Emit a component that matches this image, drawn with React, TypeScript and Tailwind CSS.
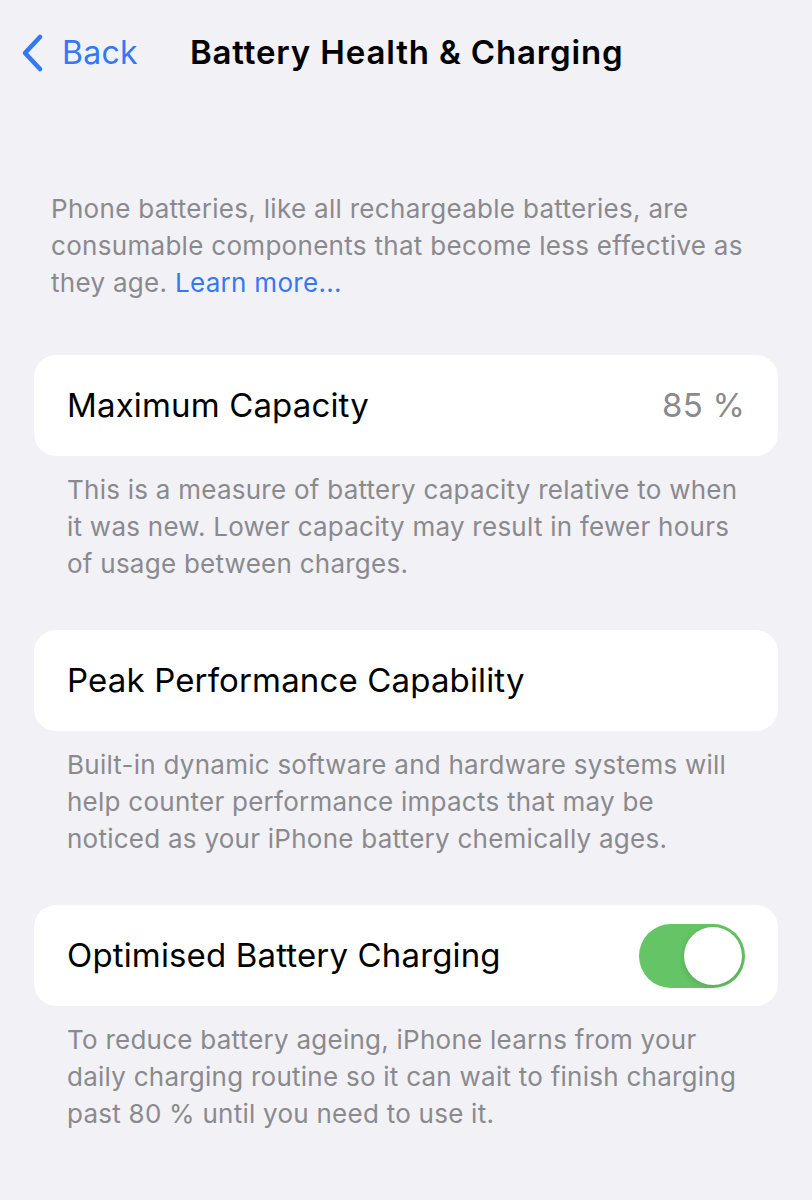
import React from 'react';

const font = { fontFamily: 'Inter, "Noto Sans", sans-serif' };

function Toggle({ on }: { on: boolean }) {
  return (
    <div
      className={`flex h-[64px] w-[106px] items-center rounded-full p-[3px] ${
        on ? 'justify-end bg-[#65c466]' : 'justify-start bg-[#e9e9eb]'
      }`}
    >
      <div className="h-[58px] w-[58px] rounded-full bg-white shadow-[0_2px_6px_rgba(0,0,0,0.15)]" />
    </div>
  );
}

function Section({
  label,
  value,
  toggle,
  footer,
}: {
  label: string;
  value?: string;
  toggle?: boolean;
  footer: string;
}) {
  return (
    <div>
      <div className="mx-[34px] flex h-[101px] items-center justify-between rounded-[22px] bg-white pl-[33px] pr-[33px]">
        <span className="text-[33px] tracking-[0.15px] text-black">{label}</span>
        {value && <span className="text-[33px] tracking-[0.2px] text-[#8a8a8e]">{value}</span>}
        {toggle !== undefined && <Toggle on={toggle} />}
      </div>
      <p className="mt-[15px] pl-[67px] pr-[62px] text-[26px] leading-[37px] tracking-[0.25px] text-[#8a8a8e]">
        {footer}
      </p>
    </div>
  );
}

export default function App() {
  return (
    <div className="min-h-[1200px] w-[812px] bg-[#f1f1f6]" style={font}>
      {/* navigation bar */}
      <div className="flex h-[106px] items-center">
        <div className="flex items-center pl-[19px] text-[#3478f6]">
          <svg width="26" height="40" viewBox="0 0 26 40" fill="none">
            <path
              d="M21 4 L6 20 L21 36"
              stroke="currentColor"
              strokeWidth="4.6"
              strokeLinecap="round"
              strokeLinejoin="round"
            />
          </svg>
          <span className="ml-[17px] text-[32px] tracking-[0.3px]">Back</span>
        </div>
        <h1 className="ml-[52px] text-[33px] font-semibold tracking-[0.85px] text-black">
          Battery Health &amp; Charging
        </h1>
      </div>

      <p className="mt-[84px] pl-[51px] pr-[50px] text-[26px] leading-[37px] tracking-[0.3px] text-[#8a8a8e]">
        Phone batteries, like all rechargeable batteries, are consumable components that become
        less effective as they age. <span className="text-[#3478f6]">Learn more...</span>
      </p>

      <div className="mt-[54px] flex flex-col gap-[48px]">
        <Section
          label="Maximum Capacity"
          value="85 %"
          footer="This is a measure of battery capacity relative to when it was new. Lower capacity may result in fewer hours of usage between charges."
        />
        <Section
          label="Peak Performance Capability"
          footer="Built-in dynamic software and hardware systems will help counter performance impacts that may be noticed as your iPhone battery chemically ages."
        />
        <Section
          label="Optimised Battery Charging"
          toggle={true}
          footer="To reduce battery ageing, iPhone learns from your daily charging routine so it can wait to finish charging past 80 % until you need to use it."
        />
      </div>
    </div>
  );
}
